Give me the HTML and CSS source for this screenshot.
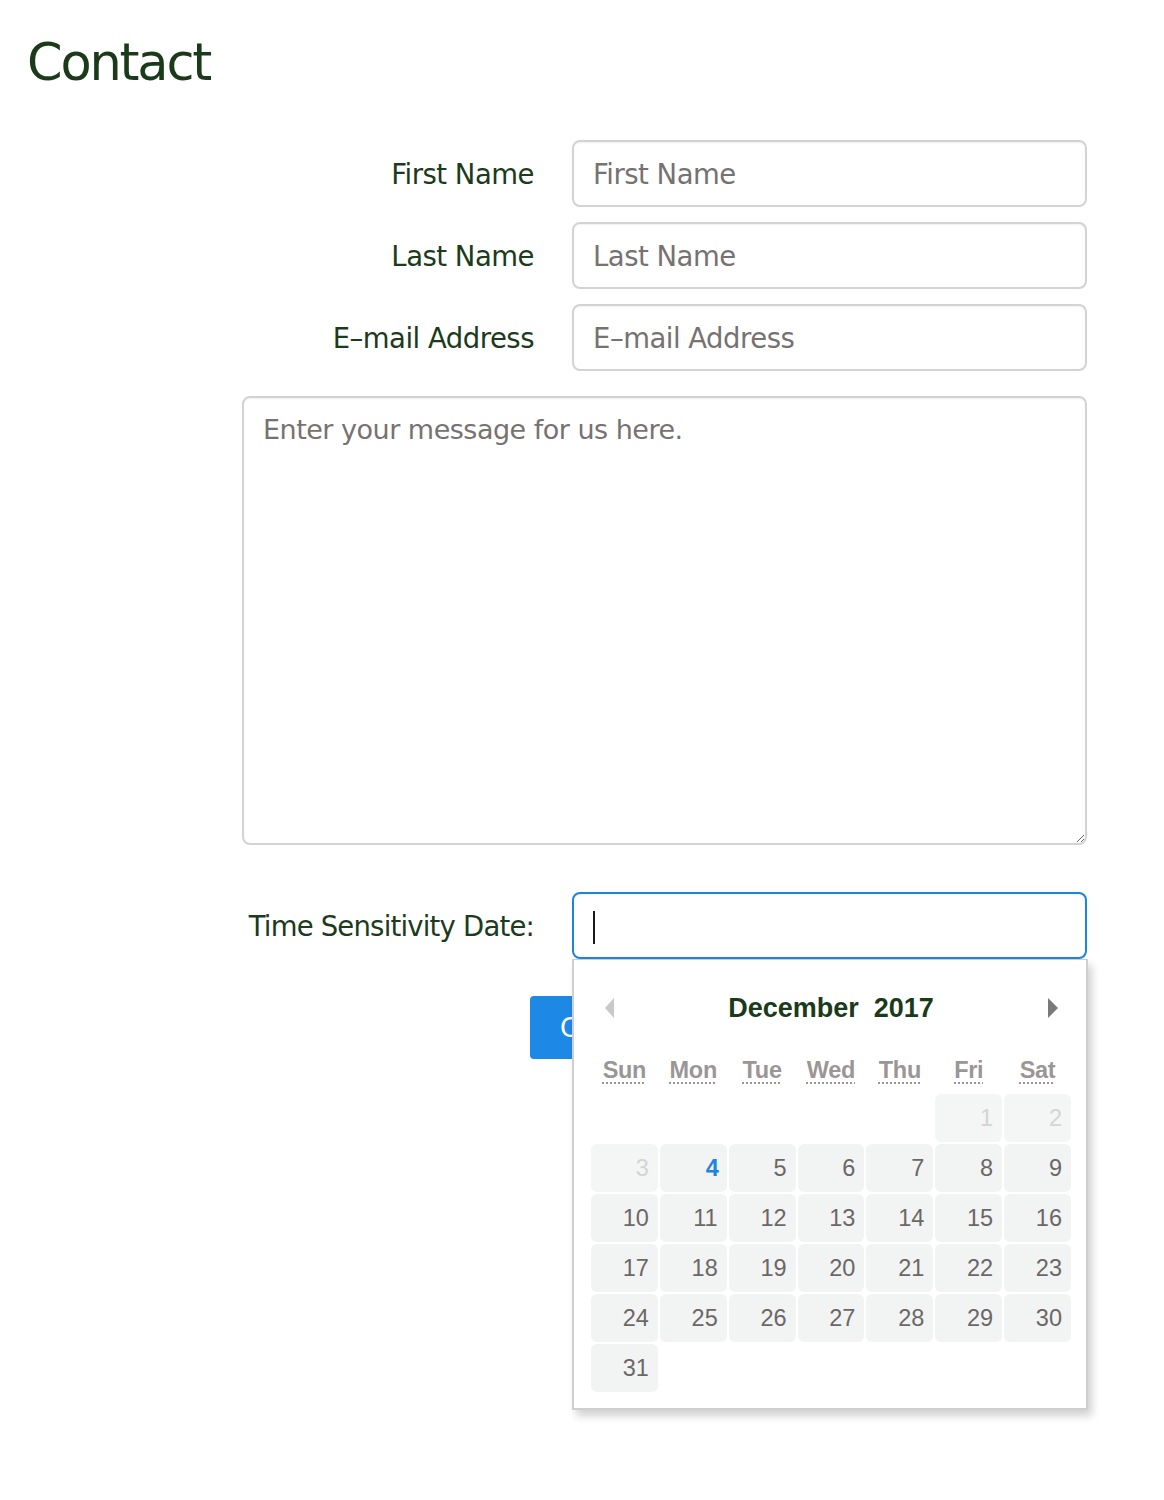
FILE: index.html
```html
<!DOCTYPE html>
<html lang="en">
<head>
<meta charset="utf-8">
<title>Contact</title>
<link rel="stylesheet" href="styles.css">
</head>
<body>
<main class="page">
  <h1 class="title">Contact</h1>
  <form class="form">
    <label class="label" for="fn">First Name</label>
    <input class="field" id="fn" type="text" placeholder="First Name">
    <label class="label" for="ln">Last Name</label>
    <input class="field" id="ln" type="text" placeholder="Last Name">
    <label class="label" for="em">E–mail Address</label>
    <input class="field" id="em" type="text" placeholder="E–mail Address">
    <textarea class="message" placeholder="Enter your message for us here."></textarea>
    <label class="label date-label" for="dt">Time Sensitivity Date:</label>
    <div class="date-wrap">
      <div class="field date-field" id="dt"><span class="caret"></span></div>
      <div class="calendar">
        <div class="cal-head">
          <span class="arrow arrow-prev"></span>
          <span class="month">December&nbsp; 2017</span>
          <span class="arrow arrow-next"></span>
        </div>
        <div class="cal-grid">
          <abbr class="dow" title="Sunday">Sun</abbr>
          <abbr class="dow" title="Monday">Mon</abbr>
          <abbr class="dow" title="Tuesday">Tue</abbr>
          <abbr class="dow" title="Wednesday">Wed</abbr>
          <abbr class="dow" title="Thursday">Thu</abbr>
          <abbr class="dow" title="Friday">Fri</abbr>
          <abbr class="dow" title="Saturday">Sat</abbr>
          <span class="empty"></span><span class="empty"></span><span class="empty"></span><span class="empty"></span><span class="empty"></span>
          <span class="day disabled">1</span><span class="day disabled">2</span>
          <span class="day disabled">3</span><span class="day today">4</span><span class="day">5</span><span class="day">6</span><span class="day">7</span><span class="day">8</span><span class="day">9</span>
          <span class="day">10</span><span class="day">11</span><span class="day">12</span><span class="day">13</span><span class="day">14</span><span class="day">15</span><span class="day">16</span>
          <span class="day">17</span><span class="day">18</span><span class="day">19</span><span class="day">20</span><span class="day">21</span><span class="day">22</span><span class="day">23</span>
          <span class="day">24</span><span class="day">25</span><span class="day">26</span><span class="day">27</span><span class="day">28</span><span class="day">29</span><span class="day">30</span>
          <span class="day">31</span>
        </div>
      </div>
    </div>
    <div class="button-row">
      <button class="submit" type="button">Contact Us</button>
    </div>
  </form>
</main>
</body>
</html>
```
FILE: styles.css
```css
* { box-sizing: border-box; }
html, body { margin: 0; padding: 0; background: #fff; }
body {
  font-family: "DejaVu Sans", "Noto Sans", sans-serif;
  color: #1c3a1c;
  width: 1164px;
}
.page { padding: 28px 0 0 0; min-height: 1500px; }
.title {
  margin: 0 0 0 27px;
  font-size: 51px;
  font-weight: normal;
  line-height: 70px;
  letter-spacing: -2.2px;
  color: #1a3a1a;
}
.form {
  display: grid;
  grid-template-columns: 534px 515px;
  column-gap: 38px;
  row-gap: 15px;
  margin-top: 42px;
  align-items: center;
}
.label {
  text-align: right;
  font-size: 27.5px;
  letter-spacing: -0.5px;
  color: #1c3a1c;
}
.date-label { letter-spacing: -0.8px; }
.field {
  width: 515px;
  height: 67px;
  border: 2px solid #d3d3d3;
  border-radius: 8px;
  padding: 0 19px;
  font-family: "DejaVu Sans", sans-serif;
  font-size: 27.5px;
  letter-spacing: -0.5px;
  color: #333;
  background: #fff;
  box-shadow: inset 0 1px 2px rgba(0,0,0,0.06);
  outline: none;
}
.field::placeholder { color: #767272; }
.message {
  grid-column: 1 / -1;
  justify-self: end;
  width: 845px;
  height: 449px;
  margin-top: 10px;
  border: 2px solid #d3d3d3;
  border-radius: 8px;
  padding: 16px 19px;
  font-family: "DejaVu Sans", sans-serif;
  font-size: 27px;
  letter-spacing: -0.5px;
  resize: vertical;
  outline: none;
  box-shadow: inset 0 1px 2px rgba(0,0,0,0.06);
}
.message::placeholder { color: #767272; }
.date-label { margin-top: 32px; }
.date-wrap { position: relative; margin-top: 32px; }
.date-field {
  border-color: #1d84df;
  display: flex;
  align-items: center;
}
.caret {
  display: block;
  width: 2px;
  height: 33px;
  background: #1a1a1a;
  margin-top: 3px;
}
.calendar {
  position: absolute;
  left: 0;
  top: 67px;
  width: 516px;
  height: 451px;
  background: #fff;
  border: 2px solid #cfcfcf;
  border-top-width: 1px;
  box-shadow: 4px 6px 8px rgba(0,0,0,0.18);
  padding: 0 15px 0 17px;
  z-index: 2;
  font-family: "Liberation Sans", Arial, sans-serif;
}
.cal-head {
  display: flex;
  align-items: center;
  justify-content: space-between;
  height: 92px;
  padding: 0 13px 0 14px;
}
.month {
  font-weight: bold;
  font-size: 27px;
  color: #1a3a1a;
  padding-top: 4px;
}
.arrow { width: 0; height: 0; border-top: 10px solid transparent; border-bottom: 10px solid transparent; margin-top: 3px; }
.arrow-prev { border-right: 9px solid #c8c8c8; }
.arrow-next { border-left: 10px solid #7a7a7a; }
.cal-grid {
  display: grid;
  grid-template-columns: repeat(7, 1fr);
  column-gap: 2px;
  row-gap: 2px;
}
.dow {
  text-align: center;
  font-weight: bold;
  font-size: 23.5px;
  color: #9b9696;
  text-decoration: underline dotted #9b9696;
  text-decoration-thickness: 2px;
  text-underline-offset: 4px;
  height: 40px;
  line-height: 36px;
  letter-spacing: -0.3px;
}
.empty { height: 48px; }
.day {
  height: 48px;
  border-radius: 6px;
  background: #f2f3f3;
  text-align: right;
  padding-right: 9px;
  font-size: 23.5px;
  line-height: 48px;
  color: #6b6767;
}
.day.disabled { color: #d4d4d4; background: #f4f5f5; }
.day.today { color: #1d84df; font-weight: bold; padding-right: 8px; }
.button-row { grid-column: 2; margin-left: -42px; margin-top: 22px; }
.submit {
  background: #1e88e5;
  color: #fff;
  border: none;
  border-radius: 4px;
  height: 63px;
  padding: 0 30px;
  font-family: "DejaVu Sans", sans-serif;
  font-size: 26px;
}
```
